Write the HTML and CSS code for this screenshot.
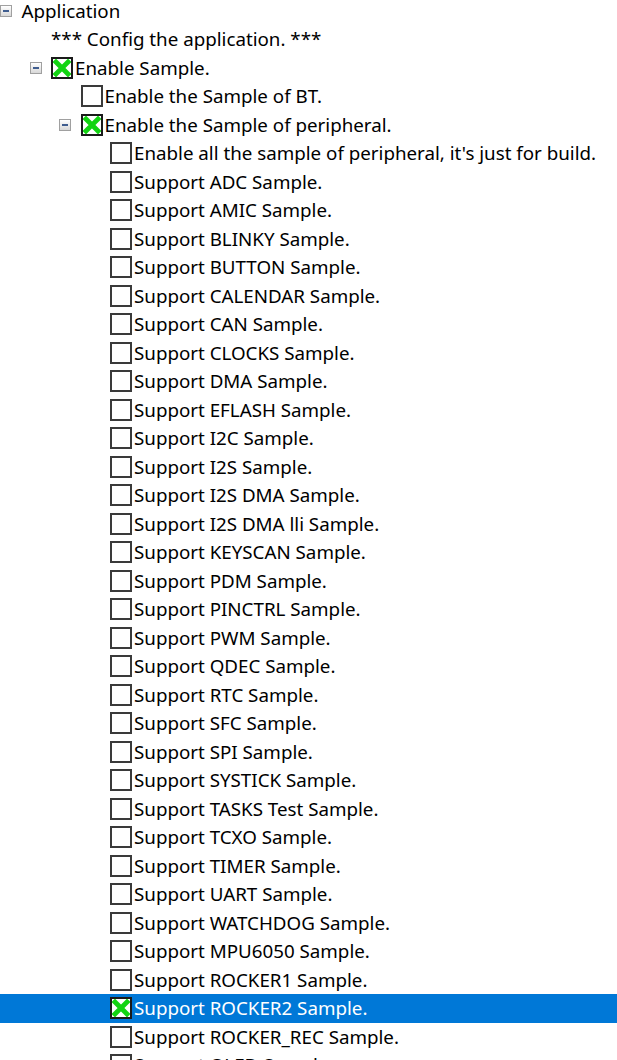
FILE: index.html
```html
<!DOCTYPE html>
<html lang="en">
<head>
<meta charset="utf-8">
<title>Config tree</title>
<link rel="stylesheet" href="styles.css">
</head>
<body>
<div class="tree">
  <div class="row l0 first"><span class="slot"><span class="exp"></span></span><span class="label">Application</span></div>
  <div class="row l1"><span class="slot"></span><span class="label">*** Config the application. ***</span></div>
  <div class="row l1"><span class="slot"><span class="exp"></span></span><span class="cb on"></span><span class="label">Enable Sample.</span></div>
  <div class="row l2"><span class="slot"></span><span class="cb"></span><span class="label">Enable the Sample of BT.</span></div>
  <div class="row l2"><span class="slot"><span class="exp"></span></span><span class="cb on"></span><span class="label">Enable the Sample of peripheral.</span></div>
  <div class="row l3"><span class="slot"></span><span class="cb"></span><span class="label">Enable all the sample of peripheral, it's just for build.</span></div>
  <div class="row l3"><span class="slot"></span><span class="cb"></span><span class="label">Support ADC Sample.</span></div>
  <div class="row l3"><span class="slot"></span><span class="cb"></span><span class="label">Support AMIC Sample.</span></div>
  <div class="row l3"><span class="slot"></span><span class="cb"></span><span class="label">Support BLINKY Sample.</span></div>
  <div class="row l3"><span class="slot"></span><span class="cb"></span><span class="label">Support BUTTON Sample.</span></div>
  <div class="row l3"><span class="slot"></span><span class="cb"></span><span class="label">Support CALENDAR Sample.</span></div>
  <div class="row l3"><span class="slot"></span><span class="cb"></span><span class="label">Support CAN Sample.</span></div>
  <div class="row l3"><span class="slot"></span><span class="cb"></span><span class="label">Support CLOCKS Sample.</span></div>
  <div class="row l3"><span class="slot"></span><span class="cb"></span><span class="label">Support DMA Sample.</span></div>
  <div class="row l3"><span class="slot"></span><span class="cb"></span><span class="label">Support EFLASH Sample.</span></div>
  <div class="row l3"><span class="slot"></span><span class="cb"></span><span class="label">Support I2C Sample.</span></div>
  <div class="row l3"><span class="slot"></span><span class="cb"></span><span class="label">Support I2S Sample.</span></div>
  <div class="row l3"><span class="slot"></span><span class="cb"></span><span class="label">Support I2S DMA Sample.</span></div>
  <div class="row l3"><span class="slot"></span><span class="cb"></span><span class="label">Support I2S DMA lli Sample.</span></div>
  <div class="row l3"><span class="slot"></span><span class="cb"></span><span class="label">Support KEYSCAN Sample.</span></div>
  <div class="row l3"><span class="slot"></span><span class="cb"></span><span class="label">Support PDM Sample.</span></div>
  <div class="row l3"><span class="slot"></span><span class="cb"></span><span class="label">Support PINCTRL Sample.</span></div>
  <div class="row l3"><span class="slot"></span><span class="cb"></span><span class="label">Support PWM Sample.</span></div>
  <div class="row l3"><span class="slot"></span><span class="cb"></span><span class="label">Support QDEC Sample.</span></div>
  <div class="row l3"><span class="slot"></span><span class="cb"></span><span class="label">Support RTC Sample.</span></div>
  <div class="row l3"><span class="slot"></span><span class="cb"></span><span class="label">Support SFC Sample.</span></div>
  <div class="row l3"><span class="slot"></span><span class="cb"></span><span class="label">Support SPI Sample.</span></div>
  <div class="row l3"><span class="slot"></span><span class="cb"></span><span class="label">Support SYSTICK Sample.</span></div>
  <div class="row l3"><span class="slot"></span><span class="cb"></span><span class="label">Support TASKS Test Sample.</span></div>
  <div class="row l3"><span class="slot"></span><span class="cb"></span><span class="label">Support TCXO Sample.</span></div>
  <div class="row l3"><span class="slot"></span><span class="cb"></span><span class="label">Support TIMER Sample.</span></div>
  <div class="row l3"><span class="slot"></span><span class="cb"></span><span class="label">Support UART Sample.</span></div>
  <div class="row l3"><span class="slot"></span><span class="cb"></span><span class="label">Support WATCHDOG Sample.</span></div>
  <div class="row l3"><span class="slot"></span><span class="cb"></span><span class="label">Support MPU6050 Sample.</span></div>
  <div class="row l3"><span class="slot"></span><span class="cb"></span><span class="label">Support ROCKER1 Sample.</span></div>
  <div class="row l3 selected"><span class="slot"></span><span class="cb on"></span><span class="label">Support ROCKER2 Sample.</span></div>
  <div class="row l3"><span class="slot"></span><span class="cb"></span><span class="label">Support ROCKER_REC Sample.</span></div>
  <div class="row l3"><span class="slot"></span><span class="cb"></span><span class="label">Support OLED Sample.</span></div>
</div>
</body>
</html>
```
FILE: styles.css
```css
html, body {
  margin: 0;
  padding: 0;
  background: #ffffff;
  overflow: hidden;
}

.tree {
  font-family: "Noto Sans", "Open Sans", sans-serif;
  font-size: 18.75px;
  color: #000000;
}

.row {
  display: flex;
  align-items: center;
  box-sizing: border-box;
  height: 28.5px;
  white-space: nowrap;
}

.row.first {
  height: 25px;
  padding-bottom: 3.5px;
}

.row.first .label {
  line-height: 21.5px;
}

.l0 { padding-left: 0; }
.l1 { padding-left: 29.5px; }
.l2 { padding-left: 59px; }
.l3 { padding-left: 88.5px; }

.slot {
  flex: 0 0 21.5px;
  display: flex;
  align-items: center;
}

.exp {
  position: relative;
  width: 10px;
  height: 10px;
  border: 1px solid #a0a0a0;
  background: linear-gradient(#ffffff, #d8d8d8);
}

.exp::after {
  content: "";
  position: absolute;
  left: 2px;
  top: 4px;
  width: 6px;
  height: 2px;
  background: #3f5d8f;
}

.cb {
  flex: 0 0 auto;
  box-sizing: border-box;
  width: 22px;
  height: 22px;
  border: 2px solid #3a3a3a;
  background: #ffffff;
  margin-right: 2px;
}

.cb.on {
  border-color: #1a1a1a;
  background: #ffffff url("data:image/svg+xml,%3Csvg xmlns='http://www.w3.org/2000/svg' viewBox='0 0 18 18'%3E%3Cpath d='M3 3 L15 15 M15 3 L3 15' stroke='%2312d412' stroke-width='4.8' stroke-linecap='square'/%3E%3C/svg%3E") center / 18px 18px no-repeat;
}

.label {
  line-height: 28px;
}

.selected {
  background: #0078d7;
  color: #ffffff;
}
```
